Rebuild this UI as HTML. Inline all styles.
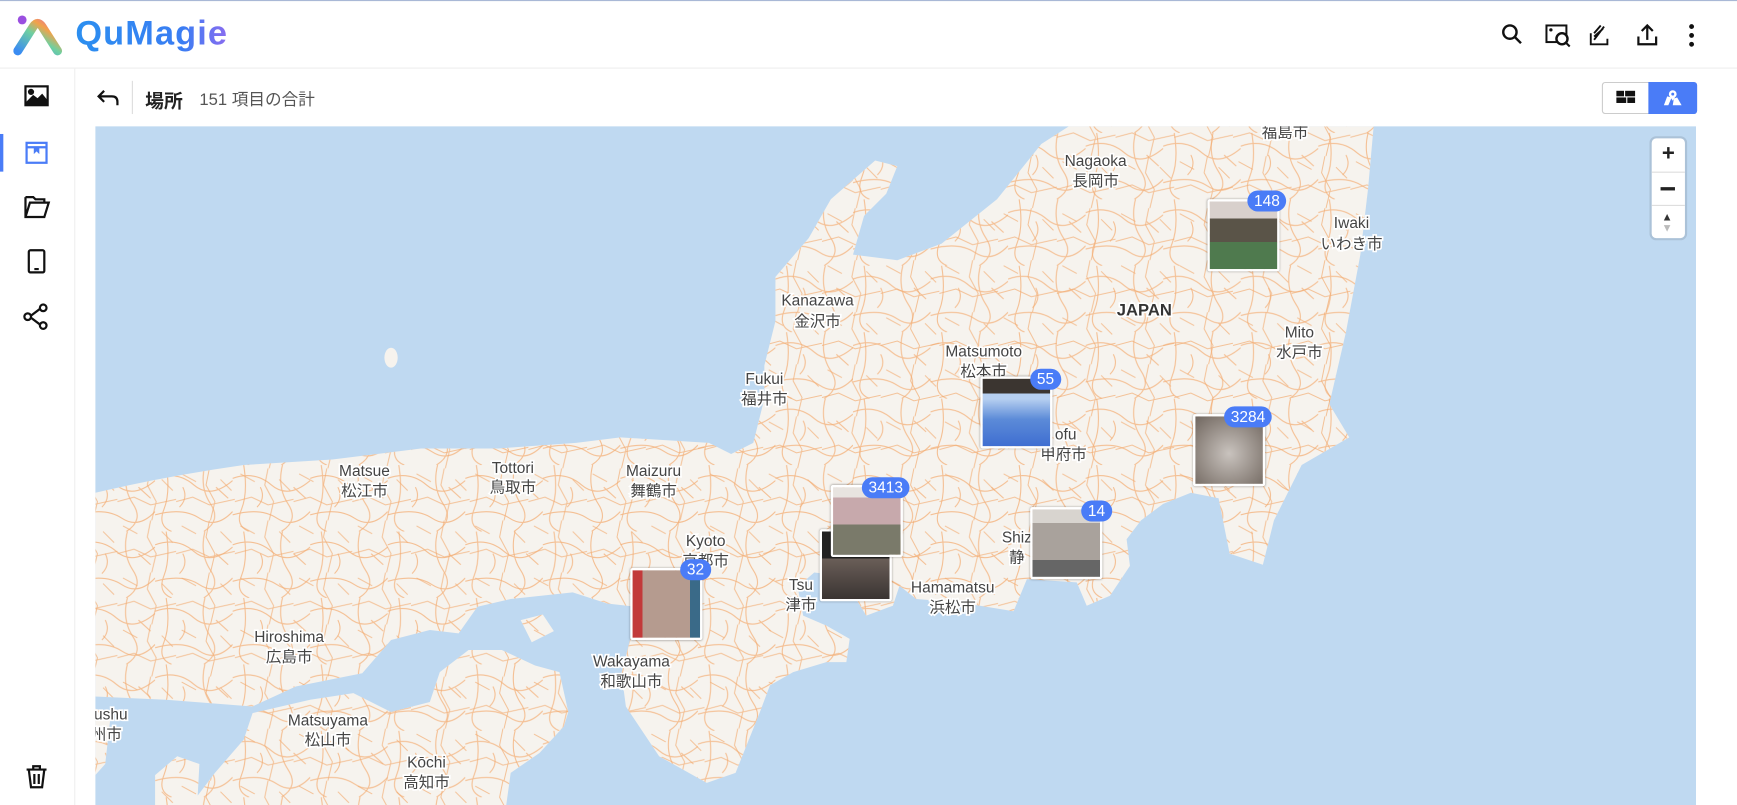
<!DOCTYPE html>
<html><head><meta charset="utf-8"><style>
*{margin:0;padding:0;box-sizing:border-box}
html,body{width:1737px;height:805px;overflow:hidden;background:#fff}
#w{position:absolute;left:0;top:0;width:1568px;height:727px;transform:scale(1.10778,1.10729);transform-origin:0 0;font-family:"Liberation Sans","Noto Sans CJK JP",sans-serif}
.abs{position:absolute}
.hdr{left:0;top:0;width:1568px;height:62px;border-top:1.5px solid #a9b8d6;border-bottom:1px solid #eee}
.logo{left:68px;top:12px;font-size:31px;font-weight:bold;letter-spacing:1px;background:linear-gradient(90deg,#2b8ff0,#3a7df3 70%,#8a6cf0);-webkit-background-clip:text;color:transparent;font-family:"Liberation Sans",sans-serif}
.side{left:0;top:62px;width:68px;height:665px;border-right:1px solid #eee}
.mk{position:absolute;border:2px solid #fff;box-shadow:0 0 2px rgba(0,0,0,.35);border-radius:2px;width:65px;height:65px}
.bd{position:absolute;background:#4a7cf7;color:#fff;font-size:14px;height:19px;line-height:19px;border-radius:10px;padding:0 6px;font-weight:500}
</style></head><body><div id="w">
<div class="abs hdr"></div>
<svg class="abs" style="left:12px;top:12px" width="46" height="40" viewBox="0 0 46 40">
<defs><linearGradient id="lg" x1="0" y1="1" x2="1" y2="0"><stop offset="0" stop-color="#3a8cf2"/><stop offset=".5" stop-color="#6fd0a0"/><stop offset=".75" stop-color="#f2a24a"/><stop offset="1" stop-color="#e66aa6"/></linearGradient></defs>
<circle cx="8" cy="6" r="4" fill="#9a4fe0"/>
<path d="M4 34 L18 12 Q22 6 26 12 L40 34" stroke="url(#lg)" stroke-width="8" fill="none" stroke-linecap="round"/>
</svg>
<div class="abs logo">QuMagie</div>
<svg class="abs" style="left:1354px;top:20px" width="185" height="24" viewBox="0 0 185 24" fill="none" stroke="#111" stroke-width="2.2">
<circle cx="9" cy="9" r="6"/><path d="M13.5 13.5 L19 19"/>
<rect x="42" y="3" width="18" height="15" stroke-width="1.8"/><circle cx="56" cy="15" r="5" fill="#fff"/><path d="M59.5 18.5 L63 22" stroke-width="1.8"/><circle cx="46" cy="7" r="1.5" fill="#111" stroke="none"/>
<path d="M82 10 V20 H97 V15 M85 16 L94 4 M85 13 L93 6 M85 10 L91 3" stroke-width="1.7"/>
<path d="M125 13 V20 H141 V13 M133 16 V3 M128 8 L133 3 L138 8" stroke-width="2"/>
<circle cx="173" cy="4" r="2.2" fill="#111" stroke="none"/><circle cx="173" cy="12" r="2.2" fill="#111" stroke="none"/><circle cx="173" cy="20" r="2.2" fill="#111" stroke="none"/>
</svg>
<div class="abs side"></div>
<div class="abs" style="left:0;top:121px;width:3px;height:34px;background:#4a7cf7"></div>
<svg class="abs" style="left:20px;top:74px" width="28" height="650" viewBox="0 0 28 650" fill="none" stroke="#111" stroke-width="2">
<rect x="3" y="4" width="20" height="17"/><circle cx="8" cy="9" r="1.8" fill="#111"/><path d="M4 19 L10 13 L14 16 L18 12 L22 17 V20 H4Z" fill="#111"/>
<rect x="4" y="55" width="18" height="18" stroke="#4a7cf7"/><path d="M4 59 H22" stroke="#4a7cf7"/><path d="M11 59 V64 L13 62 L15 64 V59" fill="#4a7cf7" stroke="#4a7cf7" stroke-width="1"/>
<path d="M3 104 V122 H20 L24 109 H7 L3 122 M3 104 H10 L12 106 H20 V109"/>
<rect x="6" y="152" width="14" height="20" rx="1.5"/><path d="M11 169 H15" />
<circle cx="5" cy="212" r="3"/><circle cx="19" cy="204" r="3"/><circle cx="19" cy="220" r="3"/><path d="M8 211 L16 205 M8 213 L16 219"/>
<path d="M4 621 H22 M10 621 V618 H16 V621 M6 621 L8 637 H18 L20 621 M11 625 V634 M15 625 V634"/>
</svg>
<svg class="abs" style="left:87px;top:79px" width="22" height="18" viewBox="0 0 22 18" fill="none" stroke="#111" stroke-width="2"><path d="M7 3 L2 8 L7 13 M2 8 H14 Q19 8 19 13 V16"/></svg>
<div class="abs" style="left:119px;top:73px;width:1px;height:30px;background:#ddd"></div>
<div class="abs" style="left:131px;top:77px;font-size:17px;font-weight:bold;color:#222">場所</div>
<div class="abs" style="left:180px;top:79px;font-size:15px;color:#555">151 項目の合計</div>
<div class="abs" style="left:1446px;top:74px;width:86px;height:29px;border:1px solid #ccc;border-radius:3px;background:#fff"></div>
<div class="abs" style="left:1488px;top:74px;width:44px;height:29px;background:#4a7cf7;border-radius:0 3px 3px 0"></div>
<svg class="abs" style="left:1459px;top:81px" width="18" height="14"><rect x="0" y="1" width="7" height="5" fill="#111"/><rect x="8" y="1" width="9" height="5" fill="#111"/><rect x="0" y="7" width="9" height="5" fill="#111"/><rect x="10" y="7" width="7" height="5" fill="#111"/></svg>
<svg class="abs" style="left:1501px;top:80px" width="18" height="16" fill="#fff"><path d="M1 15 L4 7 L8 8 L5 15Z M9 15 L10 9 L13 8 L17 15Z"/><circle cx="9" cy="5" r="3.5"/><path d="M6.5 7 L9 11 L11.5 7Z"/><circle cx="9" cy="5" r="1.3" fill="#4a7cf7"/></svg>

<svg class="abs" style="left:86px;top:114px" width="1445" height="613" viewBox="86 114 1445 613">
<defs>
<pattern id="rd" width="70" height="60" patternUnits="userSpaceOnUse">
<path d="M0 12 Q20 5 35 18 T70 14 M10 0 Q14 25 8 40 T15 60 M45 0 Q40 20 50 35 T44 60 M0 45 Q25 38 40 48 T70 42 M25 20 Q30 30 22 38 M55 20 L66 30" stroke="#f4b27c" stroke-width="1" fill="none"/>
</pattern>
<pattern id="rd2" width="53" height="47" patternUnits="userSpaceOnUse">
<path d="M0 30 L15 26 L30 33 L53 28 M30 0 L27 15 L35 30 L31 47 M5 5 L18 12 M40 10 L50 20" stroke="#f2ab70" stroke-width=".9" fill="none"/>
</pattern>
<clipPath id="cl"><path id="land" d="M86 445 Q150 430 220 420 L300 415 L380 405 L450 405 L520 400 L560 395 L640 400 L660 410 L680 400 L690 360 L690 330 L700 290 L700 250 L730 215 L750 180 L790 145 L810 150 L800 175 L780 195 L770 230 L810 235 L850 220 L900 180 L940 130 L965 114 L1240 114 L1235 170 L1228 230 L1215 300 L1200 365 L1218 395 L1175 420 L1150 470 L1140 510 L1110 500 L1100 450 L1075 445 L1050 455 L1030 470 L1017 487 L1020 511 L1002 538 L981 547 L972 526 L927 523 L915 552 L866 544 L827 541 L812 529 L806 547 L782 556 L760 520 L735 517 L720 530 L725 556 L746 565 L767 577 L764 598 L746 598 L716 607 L695 619 L686 643 L664 698 L638 707 L595 683 L565 638 L561 608 L569 577 L574 548 L548 545 L517 535 L461 541 L431 548 L414 572 L388 569 L353 578 L327 608 L267 620 L228 638 L150 632 L86 629Z M228 644 L280 632 L319 626 L353 643 L388 634 L397 607 L423 587 L453 587 L483 601 L505 607 L513 643 L509 656 L487 680 L461 698 L457 727 L172 727 L194 698 L220 668Z M86 640 L100 645 L95 690 L86 700Z M140 700 L160 683 L180 690 L178 727 L140 727Z M470 560 L490 555 L500 570 L480 580Z"/></clipPath>
</defs>
<rect x="86" y="114" width="1445" height="613" fill="#bfd9f1"/>
<use href="#land" fill="#f6f3ee"/>
<rect x="86" y="114" width="1445" height="613" fill="url(#rd)" clip-path="url(#cl)" opacity=".8"/>
<rect x="86" y="114" width="1445" height="613" fill="url(#rd2)" clip-path="url(#cl)" opacity=".7"/>
<ellipse cx="353" cy="323" rx="6" ry="9" fill="#f6f3ee"/>
<g font-family="Liberation Sans,Noto Sans CJK JP,sans-serif" font-size="14" fill="#444" text-anchor="middle" stroke="#fff" stroke-width="3" paint-order="stroke">
<text x="1160" y="124">福島市</text>
<text x="989" y="150">Nagaoka</text><text x="989" y="168">長岡市</text>
<text x="1220" y="206">Iwaki</text><text x="1220" y="225">いわき市</text>
<text x="738" y="276">Kanazawa</text><text x="738" y="295">金沢市</text>
<text x="1033" y="285" font-weight="bold" font-size="15" fill="#333">JAPAN</text>
<text x="1173" y="305">Mito</text><text x="1173" y="323">水戸市</text>
<text x="888" y="322">Matsumoto</text><text x="888" y="340">松本市</text>
<text x="690" y="347">Fukui</text><text x="690" y="365">福井市</text>
<text x="962" y="397">ofu</text><text x="960" y="415">甲府市</text>
<text x="329" y="430">Matsue</text><text x="329" y="448">松江市</text>
<text x="463" y="427">Tottori</text><text x="463" y="445">鳥取市</text>
<text x="590" y="430">Maizuru</text><text x="590" y="448">舞鶴市</text>
<text x="637" y="493">Kyoto</text><text x="637" y="511">京都市</text>
<text x="918" y="490">Shiz</text><text x="918" y="508">静</text>
<text x="723" y="533">Tsu</text><text x="723" y="551">津市</text>
<text x="860" y="535">Hamamatsu</text><text x="860" y="553">浜松市</text>
<text x="261" y="580">Hiroshima</text><text x="261" y="598">広島市</text>
<text x="570" y="602">Wakayama</text><text x="570" y="620">和歌山市</text>
<text x="296" y="655">Matsuyama</text><text x="296" y="673">松山市</text>
<text x="385" y="693">Kōchi</text><text x="385" y="711">高知市</text>
<text x="100" y="650">ushu</text><text x="96" y="668">州市</text>
</g>
</svg>

<div class="abs" style="left:1491px;top:125px;width:30px;height:90px;background:#fff;border-radius:4px;box-shadow:0 0 0 2px rgba(0,0,0,.1)"></div>
<div class="abs" style="left:1491px;top:155px;width:30px;height:1px;background:#ddd"></div>
<div class="abs" style="left:1491px;top:185px;width:30px;height:1px;background:#ddd"></div>
<div class="abs" style="left:1491px;top:128px;width:30px;text-align:center;font-size:20px;font-weight:bold;color:#222">+</div>
<div class="abs" style="left:1499px;top:169px;width:13px;height:3px;background:#222"></div>
<div class="abs" style="left:1500px;top:191px;font-size:10px;color:#333">▲</div>
<div class="abs" style="left:1500px;top:201px;font-size:10px;color:#bbb">▼</div>

<div class="mk" style="left:1090px;top:180px;background:linear-gradient(#d8d0cc 0 25%,#5a5448 25% 60%,#4f7a4e 60%)"></div><div class="bd" style="left:1126px;top:172px">148</div>
<div class="mk" style="left:885px;top:340px;background:linear-gradient(#3b3530 0 22%,#b6cff0 22% 30%,#5c8bd8 60%,#3f6ed1)"></div><div class="bd" style="left:930px;top:333px">55</div>
<div class="mk" style="left:1077px;top:374px;background:radial-gradient(circle at 50% 55%,#c9c3be,#8a817a 70%,#6f665f)"></div><div class="bd" style="left:1105px;top:367px">3284</div>
<div class="mk" style="left:740px;top:478px;background:linear-gradient(#222 0 40%,#6a5e58 40%,#3a3432)"></div>
<div class="mk" style="left:750px;top:438px;background:linear-gradient(#e8e4e0 0 15%,#c7a9ac 15% 55%,#7a7a6a 55%)"></div><div class="bd" style="left:778px;top:431px">3413</div>
<div class="mk" style="left:930px;top:458px;background:linear-gradient(#d8d4cf 0 20%,#a9a29c 20% 75%,#666 75%)"></div><div class="bd" style="left:976px;top:452px">14</div>
<div class="mk" style="left:569px;top:513px;background:linear-gradient(90deg,#c23a3a 0 15%,#b59b8f 15% 85%,#3a6a88 85%)"></div><div class="bd" style="left:614px;top:505px">32</div>
</div></body></html>
